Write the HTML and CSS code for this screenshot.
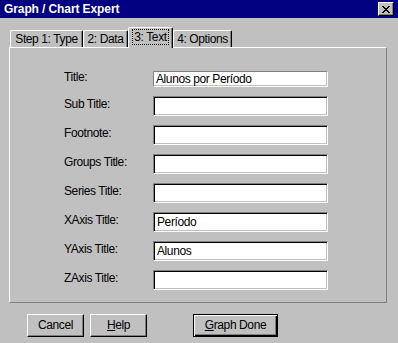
FILE: index.html
```html
<!DOCTYPE html>
<html lang="en">
<head>
    <meta charset="UTF-8">
    <title>Graph / Chart Expert</title>
    <link rel="stylesheet" href="styles.css">
</head>
<body>
    <div class="window">
        <div class="titlebar">
            <span class="caption">Graph / Chart Expert</span>
            <span class="close">
                <svg width="8" height="7" viewBox="0 0 8 7"><path d="M0 0h2v1h1v1h2v-1h1v-1h2v1h-1v1h-1v1h-1v1h1v1h1v1h1v1h-2v-1h-1v-1h-2v1h-1v1h-2v-1h1v-1h1v-1h1v-1h-1v-1h-1v-1h-1z" fill="#000"/></svg>
            </span>
        </div>

        <div class="content">
            <div class="tabs">
                <div class="tab t1">Step 1: Type</div>
                <div class="tab t2">2: Data</div>
                <div class="tab t3 active"><span class="focus">3: Text</span></div>
                <div class="tab t4">4: Options</div>
            </div>

            <div class="panel">
                <div class="form">
                    <label>Title:</label>
                    <div class="field thin">Alunos por Período</div>
                    <label>Sub Title:</label>
                    <div class="field"></div>
                    <label>Footnote:</label>
                    <div class="field"></div>
                    <label>Groups Title:</label>
                    <div class="field"></div>
                    <label>Series Title:</label>
                    <div class="field"></div>
                    <label>XAxis Title:</label>
                    <div class="field">Período</div>
                    <label>YAxis Title:</label>
                    <div class="field">Alunos</div>
                    <label>ZAxis Title:</label>
                    <div class="field"></div>
                </div>
            </div>

            <div class="buttons">
                <div class="button">Cancel</div>
                <div class="button"><u>H</u>elp</div>
                <div class="button default"><u>G</u>raph Done</div>
            </div>
        </div>
    </div>
</body>
</html>
```

FILE: styles.css
```css
body {
    margin: 0;
    font-family: "Liberation Sans", Arial, sans-serif;
    font-size: 12px;
    letter-spacing: -0.4px;
    color: #000;
}

.window {
    width: 398px;
    height: 343px;
    background-color: #c0c0c0;
    overflow: hidden;
}

.titlebar {
    height: 18px;
    background-color: #000080;
    display: flex;
    align-items: center;
    justify-content: space-between;
    padding: 0 4px 0 4px;
}

.caption {
    color: #fff;
    font-weight: 700;
    letter-spacing: -0.1px;
}

.close {
    width: 14px;
    height: 12px;
    background-color: #c0c0c0;
    border: 1px solid;
    border-color: #fff #000 #000 #fff;
    box-shadow: inset -1px -1px #808080;
    display: flex;
    align-items: center;
    justify-content: center;
}

.close svg {
    display: block;
}

.content {
    padding: 9px 11px 0 9px;
}

.tabs {
    display: flex;
    align-items: flex-end;
    height: 20px;
    padding-left: 1px;
    position: relative;
    z-index: 1;
}

.tab {
    height: 17px;
    line-height: 16px;
    border-top: 1px solid #fff;
    border-left: 1px solid #fff;
    border-right: 1px solid #000;
    box-shadow: inset -1px 0 #808080;
    border-radius: 2px 2px 0 0;
    text-align: center;
    box-sizing: border-box;
}

.t1 { width: 73px; }
.t2 { width: 45px; }
.t3 { width: 45px; }
.t4 { width: 59px; }

.tab.active {
    height: 21px;
    margin-bottom: -1px;
    background-color: #c0c0c0;
    line-height: 18px;
}

.focus {
    border: 1px dotted #000;
    padding: 0 1px;
}

.panel {
    height: 254px;
    border-top: 1px solid #fff;
    border-left: 1px solid #fff;
    border-right: 1px solid #808080;
    border-bottom: 1px solid #808080;
    box-sizing: content-box;
    width: 376px;
}

.form {
    display: grid;
    grid-template-columns: 89px 175px;
    grid-template-rows: 16px repeat(7, 20px);
    row-gap: 9px;
    padding: 23px 0 0 54px;
    align-items: center;
}

label {
    padding-bottom: 5px;
}

.field {
    height: 100%;
    box-sizing: border-box;
    background-color: #fff;
    border: 1px solid;
    border-color: #808080 #fff #fff #808080;
    box-shadow: inset 1px 1px #000, inset -1px -1px #c0c0c0;
    padding: 2px 0 0 3px;
    line-height: 14px;
}

.field.thin {
    box-shadow: inset -1px -1px #c0c0c0;
    padding: 0 0 0 2px;
}

.buttons {
    display: flex;
    gap: 6px;
    margin-top: 11px;
    padding-left: 18px;
}

.button {
    width: 57px;
    height: 23px;
    box-sizing: border-box;
    border: 1px solid;
    border-color: #fff #000 #000 #fff;
    box-shadow: inset -1px -1px #808080;
    text-align: center;
    line-height: 20px;
}

.button.default {
    width: 85px;
    margin-left: 40px;
    border: 1px solid #000;
    box-shadow: inset 1px 1px #fff, inset -1px -1px #000, inset -2px -2px #808080;
}
```
